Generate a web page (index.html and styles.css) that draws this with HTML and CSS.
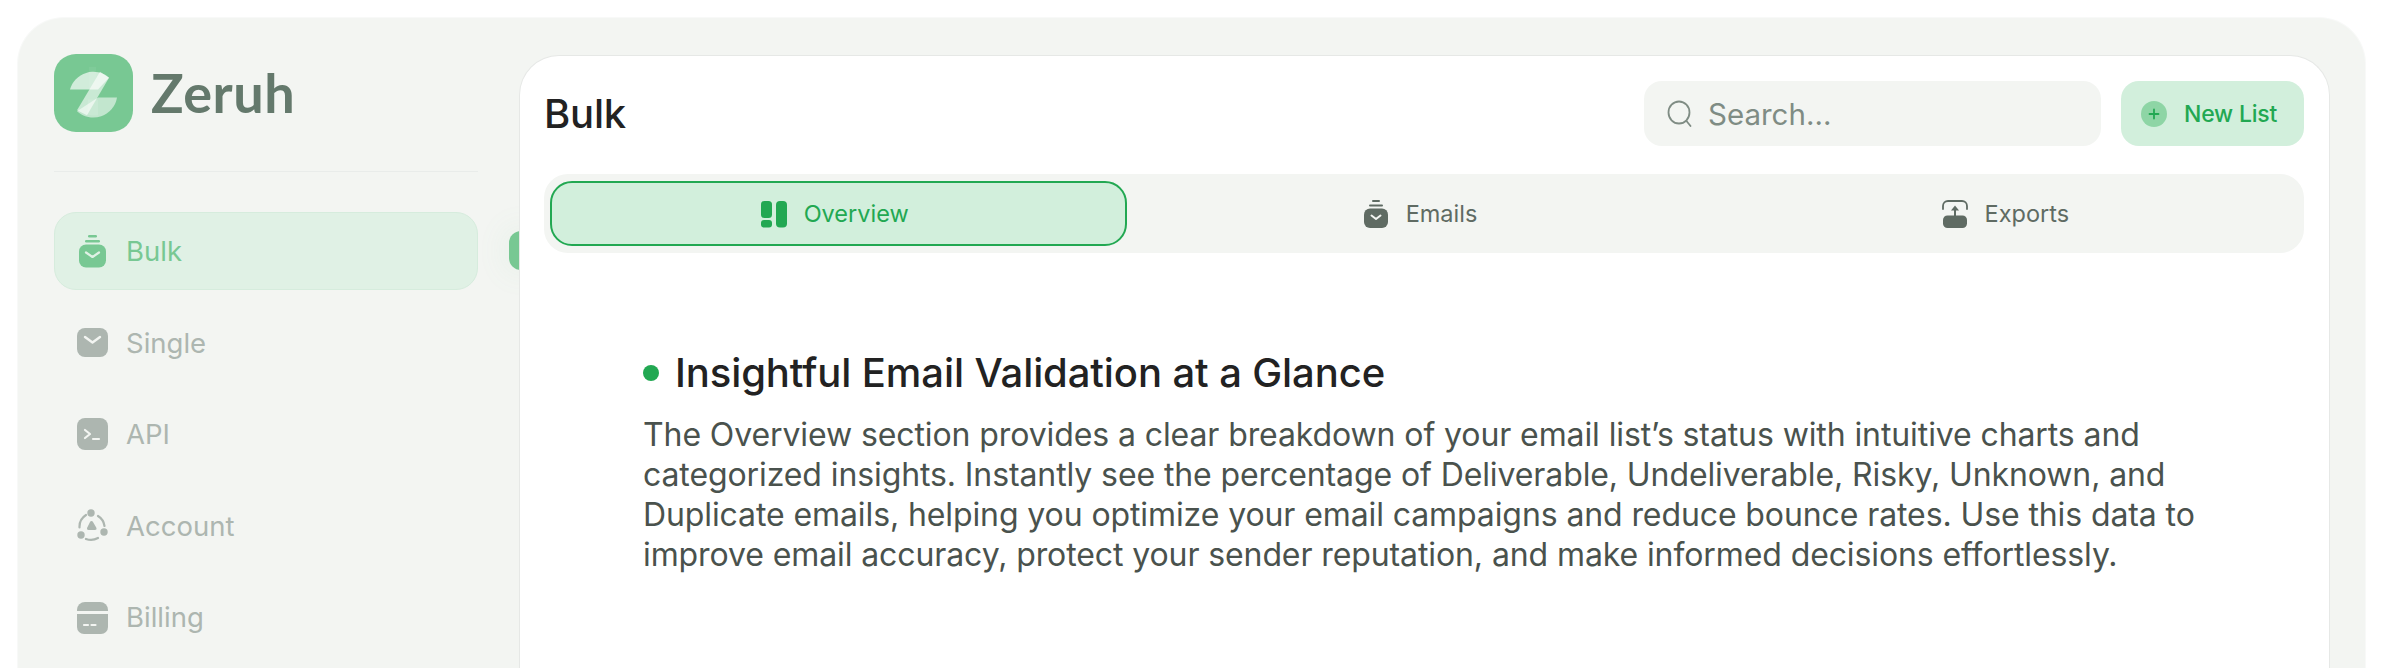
FILE: index.html
```html
<!DOCTYPE html>
<html lang="en">
<head>
<meta charset="utf-8">
<title>Zeruh – Bulk</title>
<link rel="stylesheet" href="styles.css">
</head>
<body>
<div class="shell">
  <aside class="sidebar">
    <div class="brand">
      <svg class="logo" viewBox="0 0 79 79" preserveAspectRatio="none" aria-hidden="true">
        <rect width="79" height="79" rx="22" fill="#78c893"/>
        <path d="M16 36 A24 24 0 0 1 55 24 L44 36 Z" fill="#fff" fill-opacity=".66"/>
        <path d="M44 44 H63 A24 24 0 0 1 23 58 Z" fill="#fff" fill-opacity=".55"/>
        <path d="M46 18 L55 24 L33 62 L23 57 Z" fill="#fff" fill-opacity=".6"/>
        <path d="M35 13 H42 V36 H35 Z" fill="#fff" fill-opacity=".06"/>
        <path d="M34 46 H44 V62 Q38 63 33 61 Z" fill="#fff" fill-opacity=".12"/>
      </svg>
      <span class="brand-name">Zeruh</span>
    </div>
    <div class="divider"></div>
    <nav class="nav">
      <a class="nav-item active">
        <svg class="nav-icon" viewBox="0 0 31 33" aria-hidden="true">
          <rect x="11" y="0" width="9" height="2.4" rx="1.2" fill="#78c893"/>
          <rect x="8" y="5" width="15" height="2.4" rx="1.2" fill="#78c893"/>
          <rect x="2" y="9.5" width="27" height="23" rx="7" fill="#78c893"/>
          <path d="M9 17.5 L15.5 22 L22 17.5" fill="none" stroke="#e0f1e5" stroke-width="2.2" stroke-linecap="round" stroke-linejoin="round"/>
        </svg>
        <span>Bulk</span>
      </a>
      <a class="nav-item">
        <svg class="nav-icon" viewBox="0 0 31 33" aria-hidden="true">
          <rect x="0" y="2" width="31" height="29" rx="8" fill="#adb6b0"/>
          <path d="M8 11 L15.5 16.5 L23 11" fill="none" stroke="#f3f5f2" stroke-width="2.4" stroke-linecap="round" stroke-linejoin="round"/>
        </svg>
        <span>Single</span>
      </a>
      <a class="nav-item">
        <svg class="nav-icon" viewBox="0 0 31 33" aria-hidden="true">
          <rect x="0" y="0" width="31" height="32" rx="8" fill="#adb6b0"/>
          <path d="M8 12 L13 16 L8 20" fill="none" stroke="#f3f5f2" stroke-width="2.2" stroke-linecap="round" stroke-linejoin="round"/>
          <path d="M16 21 H22" fill="none" stroke="#f3f5f2" stroke-width="2.2" stroke-linecap="round"/>
        </svg>
        <span>API</span>
      </a>
      <a class="nav-item">
        <svg class="nav-icon" viewBox="0 0 31 33" aria-hidden="true">
          <circle cx="14" cy="4" r="3.7" fill="#adb6b0"/>
          <circle cx="27" cy="23" r="3.7" fill="#adb6b0"/>
          <circle cx="4" cy="26" r="3.7" fill="#adb6b0"/>
          <path d="M9 6 A14 14 0 0 0 2.5 18.5 M21 7 A14 14 0 0 1 27.5 17 M9 30 A14 14 0 0 0 21 29" fill="none" stroke="#adb6b0" stroke-width="2.2" stroke-linecap="round"/>
          <path d="M14.5 12 Q15.5 12 16 13 L19.5 19 Q20 21 18 21 H11.5 Q9.5 21 10 19 L13 13 Q13.5 12 14.5 12 Z" fill="#adb6b0"/>
        </svg>
        <span>Account</span>
      </a>
      <a class="nav-item">
        <svg class="nav-icon" viewBox="0 0 31 33" aria-hidden="true">
          <path d="M8 1 H23 A8 8 0 0 1 31 9 V10 H0 V9 A8 8 0 0 1 8 1 Z" fill="#adb6b0"/>
          <path d="M0 13 H31 V26 A7 7 0 0 1 24 33 H7 A7 7 0 0 1 0 26 Z" fill="#adb6b0"/>
          <path d="M7 24 H11 M14.5 24 H18.5" stroke="#f3f5f2" stroke-width="2.2" stroke-linecap="round"/>
        </svg>
        <span>Billing</span>
      </a>
    </nav>
  </aside>

  <main class="panel">
    <header class="topbar">
      <h1 class="title">Bulk</h1>
      <div class="actions">
        <div class="search">
          <svg class="search-icon" viewBox="0 0 25 27" aria-hidden="true">
            <ellipse cx="12" cy="12.5" rx="10.5" ry="11" fill="none" stroke="#7f8c84" stroke-width="1.8"/>
            <path d="M19.5 21 L23.5 26" stroke="#7f8c84" stroke-width="1.8" stroke-linecap="round"/>
          </svg>
          <span>Search...</span>
        </div>
        <button class="new-list">
          <svg class="plus" viewBox="0 0 26 26" aria-hidden="true">
            <circle cx="13" cy="13" r="13" fill="#8ed5a5"/>
            <path d="M13 8.5 V17.5 M8.5 13 H17.5" stroke="#22a852" stroke-width="1.8" stroke-linecap="round"/>
          </svg>
          <span>New List</span>
        </button>
      </div>
    </header>

    <div class="tabs">
      <a class="tab selected">
        <svg class="tab-icon" viewBox="0 0 26 28" aria-hidden="true">
          <rect x="0" y="1" width="11" height="17" rx="3.5" fill="#22a852"/>
          <rect x="0" y="20" width="11" height="7.5" rx="3" fill="#22a852"/>
          <rect x="15" y="1" width="11" height="26.5" rx="4" fill="#22a852"/>
        </svg>
        <span>Overview</span>
      </a>
      <a class="tab">
        <svg class="tab-icon" viewBox="0 0 26 28" aria-hidden="true">
          <rect x="9" y="0" width="8" height="2" rx="1" fill="#5f6b63"/>
          <rect x="6" y="4.5" width="14" height="2" rx="1" fill="#5f6b63"/>
          <rect x="1" y="8.5" width="24" height="19.5" rx="6" fill="#5f6b63"/>
          <path d="M8.5 15.5 L13 19 L17.5 15.5" fill="none" stroke="#f3f5f2" stroke-width="2" stroke-linecap="round" stroke-linejoin="round"/>
        </svg>
        <span>Emails</span>
      </a>
      <a class="tab">
        <svg class="tab-icon" viewBox="0 0 26 28" aria-hidden="true">
          <path d="M1 9 V6 A5 5 0 0 1 6 1 H20 A5 5 0 0 1 25 6 V9" fill="none" stroke="#5f6b63" stroke-width="1.8" stroke-linecap="round"/>
          <path d="M13 5.5 L17 10.5 H9 Z" fill="#5f6b63"/>
          <rect x="12" y="9" width="2" height="7" fill="#5f6b63"/>
          <rect x="1" y="15.5" width="24" height="12.5" rx="4.5" fill="#5f6b63"/>
        </svg>
        <span>Exports</span>
      </a>
    </div>

    <section class="intro">
      <h2 class="intro-title"><span class="dot"></span>Insightful Email Validation at a Glance</h2>
      <p class="intro-text">The Overview section provides a clear breakdown of your email list’s status with intuitive charts and categorized insights. Instantly see the percentage of Deliverable, Undeliverable, Risky, Unknown, and Duplicate emails, helping you optimize your email campaigns and reduce bounce rates. Use this data to improve email accuracy, protect your sender reputation, and make informed decisions effortlessly.</p>
    </section>
  </main>
</div>
</body>
</html>
```

FILE: styles.css
```css
* { box-sizing: border-box; }
html, body { height: 100%; }
body {
  margin: 0;
  padding: 18px 19px 0 18px;
  background: #fff;
  overflow: hidden;
  font-family: Inter, "Liberation Sans", sans-serif;
}
.shell {
  display: flex;
  min-height: 800px;
  background: #f3f5f2;
  border-radius: 46px 46px 0 0;
  box-shadow: 0 0 0 1px #f8f9f8;
}
.sidebar {
  width: 501px;
  flex: none;
  padding: 36px 41px 0 36px;
}
.brand {
  display: flex;
  align-items: center;
  gap: 18px;
  height: 78px;
}
.logo { width: 79px; height: 78px; flex: none; }
.brand-name {
  font-family: Lato, Inter, sans-serif;
  font-size: 54px;
  font-weight: 700;
  letter-spacing: .6px;
  color: #64796c;
  line-height: 1;
}
.divider {
  height: 1px;
  margin-top: 39px;
  background: #e9ecea;
}
.nav {
  display: flex;
  flex-direction: column;
  gap: 13.5px;
  margin-top: 40px;
}
.nav-item {
  position: relative;
  display: flex;
  align-items: center;
  gap: 18px;
  height: 78px;
  padding-left: 22px;
  border-radius: 22px;
  border: 1px solid transparent;
  font-size: 27.5px;
  color: #adb6b0;
}
.nav-item.active {
  background: #e0f1e5;
  border-color: #d6ecdd;
  color: #78c893;
}
.nav-item.active::after {
  content: "";
  position: absolute;
  top: 18px;
  left: 454px;
  width: 24px;
  height: 39px;
  border-radius: 12px;
  background: #78c893;
  box-shadow: 0 0 30px 6px rgba(120, 200, 147, .07);
}
.nav-icon { width: 31px; height: 33px; flex: none; }

.panel {
  position: relative;
  z-index: 1;
  flex: 1;
  margin: 37px 35px 0 0;
  padding: 25px 25px 0 24px;
  background: #fff;
  border: 1px solid #e6e8e6;
  border-bottom: 0;
  border-radius: 40px 40px 0 0;
}
.topbar {
  display: flex;
  align-items: center;
  justify-content: space-between;
  height: 65px;
}
.title {
  margin: 0;
  font-size: 40px;
  font-weight: 500;
  letter-spacing: -.2px;
  color: #222;
}
.actions { display: flex; gap: 20px; }
.search {
  display: flex;
  align-items: center;
  gap: 16px;
  width: 457px;
  height: 65px;
  padding-left: 23px;
  background: #f3f5f2;
  border-radius: 18px;
  font-size: 29.5px;
  color: #7f8c84;
}
.search-icon { width: 25px; height: 27px; flex: none; }
.new-list {
  display: flex;
  align-items: center;
  gap: 17px;
  width: 183px;
  height: 65px;
  padding: 0 0 0 20px;
  border: 0;
  background: #d2efdc;
  border-radius: 18px;
  font: inherit;
  font-size: 23px;
  font-weight: 500;
  letter-spacing: -.2px;
  color: #22a852;
}
.plus { width: 26px; height: 26px; flex: none; }

.tabs {
  display: grid;
  grid-template-columns: repeat(3, 1fr);
  gap: 8px;
  height: 79px;
  margin-top: 28px;
  padding: 7px 6px;
  background: #f3f5f2;
  border-radius: 24px;
}
.tab {
  display: flex;
  align-items: center;
  justify-content: center;
  gap: 17px;
  padding-right: 8px;
  border: 2px solid transparent;
  border-radius: 22px;
  font-size: 23.5px;
  font-weight: 400;
  color: #5f6b63;
}
.tab.selected {
  background: #d2efdc;
  border-color: #22a852;
  color: #22a852;
}
.tab-icon { width: 26px; height: 28px; flex: none; }

.intro { padding: 96px 0 0 99px; }
.intro-title {
  display: flex;
  align-items: center;
  gap: 16px;
  margin: 0;
  font-size: 40px;
  line-height: 48px;
  font-weight: 500;
  letter-spacing: -.1px;
  color: #222;
}
.dot {
  width: 16px;
  height: 16px;
  flex: none;
  border-radius: 50%;
  background: #22a852;
}
.intro-text {
  width: 1590px;
  margin: 18px 0 0;
  font-size: 32px;
  line-height: 40px;
  letter-spacing: -.1px;
  color: #4a524d;
}
```
